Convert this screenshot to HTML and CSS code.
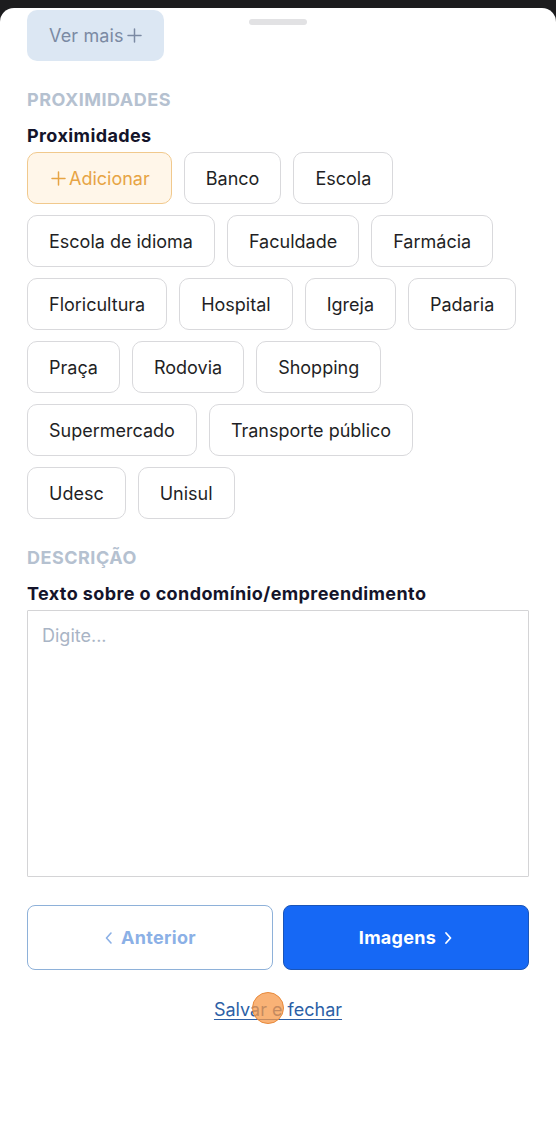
FILE: index.html
```html
<!DOCTYPE html>
<html lang="pt-BR">
<head>
  <meta charset="UTF-8" />
  <meta name="viewport" content="width=device-width, initial-scale=1.0"/>
  <title>Condomínio</title>
  <link rel="stylesheet" href="styles.css">
</head>
<body>
  <div class="sheet">
    <div class="handle"></div>

    <button class="more">Ver mais
      <svg class="plus" width="15" height="15" viewBox="0 0 15 15"><path d="M7.5 1 V14 M1 7.5 H14" stroke="currentColor" stroke-width="1.5" stroke-linecap="round"/></svg>
    </button>

    <h2 class="section">PROXIMIDADES</h2>
    <h3 class="label">Proximidades</h3>
    <div class="chips">
      <button class="chip add">
        <svg class="plus" width="15" height="15" viewBox="0 0 15 15"><path d="M7.5 1 V14 M1 7.5 H14" stroke="currentColor" stroke-width="1.5" stroke-linecap="round"/></svg>
        Adicionar
      </button>
      <button class="chip">Banco</button>
      <button class="chip">Escola</button>
      <button class="chip">Escola de idioma</button>
      <button class="chip">Faculdade</button>
      <button class="chip">Farmácia</button>
      <button class="chip">Floricultura</button>
      <button class="chip">Hospital</button>
      <button class="chip">Igreja</button>
      <button class="chip">Padaria</button>
      <button class="chip">Praça</button>
      <button class="chip">Rodovia</button>
      <button class="chip">Shopping</button>
      <button class="chip">Supermercado</button>
      <button class="chip">Transporte público</button>
      <button class="chip">Udesc</button>
      <button class="chip">Unisul</button>
    </div>

    <h2 class="section desc">DESCRIÇÃO</h2>
    <h3 class="label">Texto sobre o condomínio/empreendimento</h3>
    <textarea class="text" placeholder="Digite..."></textarea>

    <div class="nav">
      <button class="nav-btn prev">
        <svg width="10" height="14" viewBox="0 0 10 14"><path d="M7 2 L2.5 7 L7 12" fill="none" stroke="currentColor" stroke-width="1.6" stroke-linecap="round" stroke-linejoin="round"/></svg>
        Anterior
      </button>
      <button class="nav-btn next">
        Imagens
        <svg width="10" height="14" viewBox="0 0 10 14"><path d="M3 2 L7.5 7 L3 12" fill="none" stroke="currentColor" stroke-width="1.8" stroke-linecap="round" stroke-linejoin="round"/></svg>
      </button>
    </div>

    <div class="save-row">
      <a href="#" class="save">Salvar e fechar</a>
      <span class="tap"></span>
    </div>
  </div>
</body>
</html>
```

FILE: styles.css
```css
* { box-sizing: border-box; margin: 0; padding: 0; }
body {
  background: #1c1c1e;
  font-family: Inter, "Noto Sans", sans-serif;
  padding-top: 8px;
  height: 1121px;
  overflow: hidden;
}

.sheet {
  position: relative;
  background: #fff;
  border-radius: 14px 14px 0 0;
  padding: 2px 27px 0;
  height: 1113px;
}

.handle {
  position: absolute;
  top: 11px;
  left: 249px;
  width: 58px;
  height: 6px;
  border-radius: 3px;
  background: #e2e2e4;
}

button { font-family: inherit; cursor: pointer; }

.more {
  display: flex;
  align-items: center;
  gap: 3px;
  height: 51px;
  padding: 0 22px;
  background: #dce7f3;
  color: #7b8aa3;
  border: none;
  border-radius: 10px;
  font-size: 18px;
  letter-spacing: 0.15px;
}

.section {
  margin-top: 28px;
  font-size: 18px;
  line-height: 22px;
  font-weight: 700;
  color: #b5c1d0;
  letter-spacing: 0.5px;
}
.section.desc { margin-top: 28px; }

.label {
  margin-top: 14px;
  font-size: 18px;
  line-height: 22px;
  font-weight: 700;
  color: #14142a;
  letter-spacing: 0.4px;
}

.chips {
  margin-top: 5px;
  display: flex;
  flex-wrap: wrap;
  row-gap: 11px;
}

.chip {
  height: 52px;
  margin-right: 12px;
  padding: 0 21px;
  background: #fff;
  border: 1px solid #d9d9dc;
  border-radius: 10px;
  font-size: 18px;
  color: #1f1f25;
}
.chip.add {
  display: flex;
  align-items: center;
  gap: 3px;
  padding-left: 23px;
  background: #fff6e9;
  border-color: #f1c98d;
  color: #e7a444;
}

.text {
  display: block;
  margin-top: 5px;
  width: 100%;
  height: 267px;
  padding: 14px;
  border: 1px solid #d4d4d6;
  border-radius: 1px;
  resize: none;
  font-family: inherit;
  font-size: 18px;
  line-height: 22px;
  color: #222;
}
.text::placeholder { color: #a9b4c5; }

.nav {
  margin-top: 28px;
  display: flex;
  gap: 10px;
}
.nav-btn {
  flex: 1;
  height: 65px;
  display: flex;
  align-items: center;
  justify-content: center;
  gap: 7px;
  border-radius: 8px;
  font-size: 18px;
  font-weight: 700;
  letter-spacing: 0.3px;
}
.nav-btn.prev {
  background: #fff;
  border: 1px solid #8eb1d9;
  color: #8bb0e6;
}
.nav-btn.next {
  background: #1668f5;
  border: 1px solid #1a55b8;
  color: #fff;
}

.save-row {
  position: relative;
  margin-top: 29px;
  text-align: center;
  line-height: 22px;
}
.save {
  font-size: 18px;
  color: #2c5fa6;
  text-decoration: underline;
  text-underline-offset: 3px;
}
.tap {
  position: absolute;
  left: 225px;
  top: -7px;
  width: 32px;
  height: 32px;
  border-radius: 50%;
  background: rgba(247, 152, 72, 0.75);
  border: 1px solid #e88a3c;
}
```
